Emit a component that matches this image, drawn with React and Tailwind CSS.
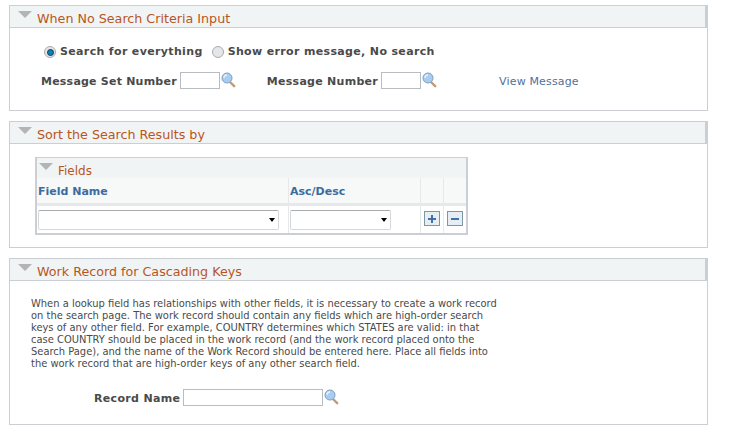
function Triangle({ className }) {
  return (
    <svg className={className} width="14" height="7" viewBox="0 0 14 7">
      <path d="M0 0H14L7 7Z" fill="#b4b4b4" />
    </svg>
  )
}

function Lookup() {
  return (
    <svg className="ml-px shrink-0" width="15" height="16" viewBox="0 0 15 16">
      <path d="M9.500 10.500L13.200 14.200" stroke="#c49a72" strokeWidth="2.4" strokeLinecap="round" />
      <circle cx="6" cy="6" r="5" fill="#a9cdf0" stroke="#7d9fc0" strokeWidth="1" />
      <path d="M3 6C3 4 4.500 3 6 3" stroke="#e8f3fc" strokeWidth="1.3" fill="none" />
    </svg>
  )
}

function Section({ title, className, children }) {
  return (
    <section className={`w-[699px] border border-[#cbced2] ${className}`}>
      <div className="flex h-[22px] items-start border-b border-[#cbced2] border-r-2 bg-[#f1f4f5]">
        <Triangle className="ml-[8px] mt-[5px]" />
        <h2 className="ml-[5px] mt-[5px] text-[12.7px] leading-[15px] text-[#b8561c]">{title}</h2>
      </div>
      {children}
    </section>
  )
}

function Radio({ checked }) {
  return (
    <span className="flex h-[12px] w-[12px] items-center justify-center rounded-full border border-[#a5adb3] bg-[#e4e6e8]">
      {checked && <span className="h-[7px] w-[7px] rounded-full border border-[#17384f] bg-[#0f7fb8]" />}
    </span>
  )
}

function Select({ className }) {
  return (
    <div className={`flex h-[20px] items-center justify-end rounded-[2px] border border-[#d5d7da] border-t-[#a9abae] bg-white pr-[3px] ${className}`}>
      <span className="h-0 w-0 border-x-[3.5px] border-t-[4px] border-x-transparent border-t-black" />
    </div>
  )
}

function GridButton({ minus }) {
  return (
    <span className="flex h-[15px] w-[16px] items-center justify-center border border-[#7c98a6] bg-[#e6eef3]">
      <span className="relative h-[2px] w-[8px] bg-[#3f73a8]">
        {!minus && <span className="absolute left-[3px] top-[-3px] h-[8px] w-[2px] bg-[#3f73a8]" />}
      </span>
    </span>
  )
}

export default function App() {
  return (
    <div className="h-[430px] w-[742px] overflow-hidden bg-white pl-[9px] pt-[5px] font-['DejaVu_Sans',sans-serif] text-[#4a4a4a]">
      <Section title="When No Search Criteria Input" className="h-[106px]">
        <div className="ml-[34px] mt-[17px] flex items-center text-[11px] font-bold leading-[14px] tracking-[0.35px]">
          <Radio checked />
          <span className="ml-[4px]">Search for everything</span>
          <span className="ml-[9px]"><Radio /></span>
          <span className="ml-[4px]">Show error message, No search</span>
        </div>
        <div className="mt-[13px] flex items-start text-[11px] leading-[17px]">
          <span className="ml-[31px] pt-[1px] font-bold tracking-[0.22px]">Message Set Number</span>
          <span className="ml-[3px] h-[17px] w-[40px] border border-[#b9bcc0]" />
          <Lookup />
          <span className="ml-[31px] pt-[1px] font-bold tracking-[0.28px]">Message Number</span>
          <span className="ml-[3px] h-[17px] w-[40px] border border-[#b9bcc0]" />
          <Lookup />
          <span className="ml-[62px] pt-[1px] tracking-[0.16px] text-[#51709c]">View Message</span>
        </div>
      </Section>

      <Section title="Sort the Search Results by" className="mt-[10px] h-[127px]">
        <div className="ml-[25px] mt-[13px] w-[433px] border-2 border-t border-[#cbced2]">
          <div className="flex h-[20px] items-start bg-[#f1f4f5]">
            <Triangle className="ml-[2px] mt-[5px]" />
            <span className="ml-[5px] mt-[6px] text-[12px] leading-[14px] text-[#b8561c]">Fields</span>
          </div>
          <div className="grid grid-cols-[252px_132px_23px_22px] text-[11px] font-bold leading-[14px] text-[#3c6c9e]">
            <div className="h-[28px] border-r border-b-[3px] border-[#e6e8e9] bg-[#f7f8f8] pl-[1px] pt-[7px]">Field Name</div>
            <div className="h-[28px] border-r border-b-[3px] border-[#e6e8e9] bg-[#f7f8f8] pl-[1px] pt-[7px]">Asc/Desc</div>
            <div className="h-[28px] border-r border-b-[3px] border-[#e6e8e9] bg-[#f7f8f8]" />
            <div className="h-[28px] border-b-[3px] border-[#e6e8e9] bg-[#f7f8f8]" />
            <div className="h-[27px] border-r border-[#e6e8e9] pl-[1px] pt-[4px]"><Select className="w-[241px]" /></div>
            <div className="h-[27px] border-r border-[#e6e8e9] pl-[1px] pt-[4px]"><Select className="w-[101px]" /></div>
            <div className="h-[27px] border-r border-[#e6e8e9] pl-[3px] pt-[5px]"><GridButton /></div>
            <div className="h-[27px] pl-[3px] pt-[5px]"><GridButton minus /></div>
          </div>
        </div>
      </Section>

      <Section title="Work Record for Cascading Keys" className="mt-[10px] h-[167px]">
        <p className="ml-[21px] mt-[17px] w-[480px] text-[9.93px] leading-[12px]">
          When a lookup field has relationships with other fields, it is necessary to create a work record<br />
          on the search page. The work record should contain any fields which are high-order search<br />
          keys of any other field. For example, COUNTRY determines which STATES are valid: in that<br />
          case COUNTRY should be placed in the work record (and the work record placed onto the<br />
          Search Page), and the name of the Work Record should be entered here. Place all fields into<br />
          the work record that are high-order keys of any other search field.
        </p>
        <div className="mt-[19px] flex items-start text-[11px] font-bold leading-[17px]">
          <span className="ml-[84px] pt-[1px] tracking-[0.33px]">Record Name</span>
          <span className="ml-[3px] h-[17px] w-[140px] border border-[#b9bcc0]" />
          <Lookup />
        </div>
      </Section>
    </div>
  )
}
